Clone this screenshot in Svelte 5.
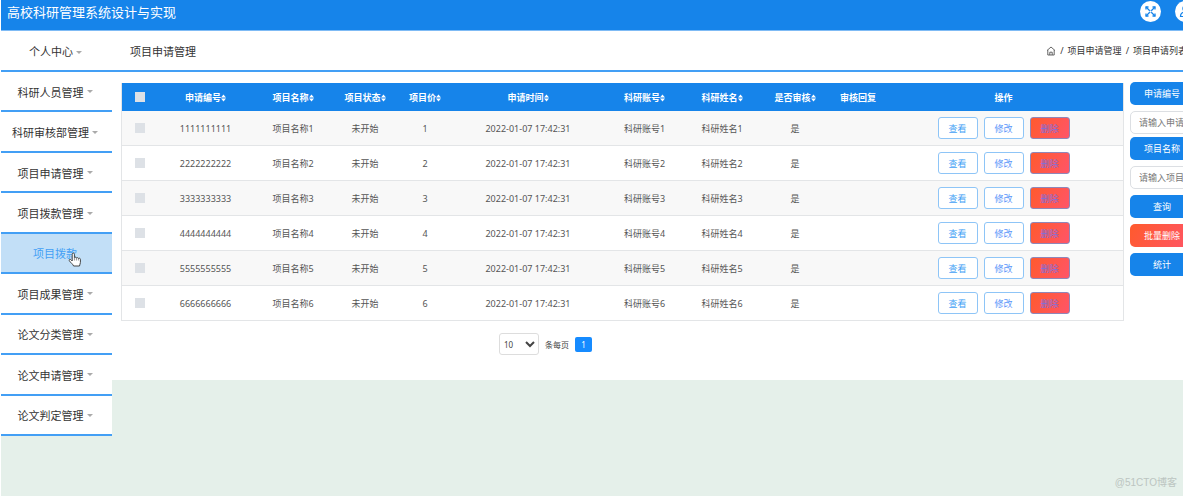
<script lang="ts">
  const menu = [
    { label: '科研人员管理' },
    { label: '科研审核部管理' },
    { label: '项目申请管理' },
    { label: '项目拨款管理' },
    { label: '项目拨款', child: true },
    { label: '项目成果管理' },
    { label: '论文分类管理' },
    { label: '论文申请管理' },
    { label: '论文判定管理' }
  ];

  const columns = [
    { title: '申请编号', sortable: true },
    { title: '项目名称', sortable: true },
    { title: '项目状态', sortable: true },
    { title: '项目价', sortable: true },
    { title: '申请时间', sortable: true },
    { title: '科研账号', sortable: true },
    { title: '科研姓名', sortable: true },
    { title: '是否审核', sortable: true },
    { title: '审核回复', sortable: false },
    { title: '操作', sortable: false }
  ];

  const rows = [1, 2, 3, 4, 5, 6].map((n) => ({
    code: String(n).repeat(10),
    name: `项目名称${n}`,
    state: '未开始',
    price: n,
    time: '2022-01-07 17:42:31',
    account: `科研账号${n}`,
    person: `科研姓名${n}`,
    checked: '是',
    reply: ''
  }));

  let pageSize = $state('10');
</script>

<div class="app">
  <header class="topbar">
    <h1>高校科研管理系统设计与实现</h1>
    <div class="tools">
      <button type="button" class="round" aria-label="全屏">
        <svg viewBox="0 0 21 21" width="21" height="21">
          <g fill="none" stroke="#1684ea" stroke-width="1.3">
            <path d="M6 8.5V6h2.5M12.5 6H15v2.5M15 12.5V15h-2.5M8.5 15H6v-2.5" />
            <path d="M6 6l9 9M15 6l-9 9" />
          </g>
          <circle cx="10.5" cy="10.5" r="1" fill="#fff" />
        </svg>
      </button>
      <button type="button" class="round" aria-label="用户">
        <svg viewBox="0 0 21 21" width="21" height="21">
          <g fill="none" stroke="#1684ea" stroke-width="1.2">
            <circle cx="10.5" cy="7.5" r="2.6" />
            <path d="M5.5 15.5c0-3 2-4.500 5-4.500s5 1.500 5 4.500z" />
          </g>
        </svg>
      </button>
    </div>
  </header>

  <div class="subbar">
    <a class="center-link" href="#center">个人中心<i class="caret"></i></a>
    <h2>项目申请管理</h2>
    <nav class="crumbs" aria-label="路径">
      <svg viewBox="0 0 10 10" width="10" height="10">
        <path d="M1 4.500L5 1l4 3.500M1.800 4v5h6.400V4M3.800 9V6.200h2.400V9" fill="none" stroke="#555" stroke-width="0.9" />
      </svg>
      <span>/</span>
      <a href="#apply">项目申请管理</a>
      <span>/</span>
      <a href="#list">项目申请列表</a>
    </nav>
  </div>

  <div class="body">
    <nav class="sidebar" aria-label="菜单">
      {#each menu as item}
        <a href="#menu" class:active={item.child}>
          {item.label}
          {#if item.child}
            <svg class="hand" viewBox="0 0 14 17" width="14" height="17">
              <path
                d="M4.200 10V3.200c0-1.600 2.200-1.600 2.200 0v3.500c.3-.8 1.900-.7 2 .3.500-.7 1.900-.5 2 .5.600-.6 2-.3 2 .8v3.200c0 1.300-.8 2-.9 3.500H5.600c-.5-1.700-3-3.300-4.300-5.300-.6-1.200.9-1.900 1.700-.9z"
                fill="#fff"
                stroke="#444"
                stroke-width="1"
              />
              <path d="M6.400 6.500v3M8.400 7v2.500M10.400 7.500v2" stroke="#666" stroke-width="0.7" />
            </svg>
          {:else}
            <i class="caret"></i>
          {/if}
        </a>
      {/each}
    </nav>

    <main>
      <section class="list">
        <table>
          <colgroup>
            <col class="w-check" />
            <col class="w-code" />
            <col class="w-name" />
            <col class="w-state" />
            <col class="w-price" />
            <col class="w-time" />
            <col class="w-account" />
            <col class="w-person" />
            <col class="w-audit" />
            <col class="w-reply" />
            <col />
          </colgroup>
          <thead>
            <tr>
              <th><input type="checkbox" aria-label="全选" /></th>
              {#each columns as col}
                <th>
                  {col.title}{#if col.sortable}<svg class="sort" viewBox="0 0 5 8" width="5" height="8"><path d="M0 3.400L2.500.4 5 3.400zM0 4.600h5L2.500 7.600z" fill="#fff" /></svg>{/if}
                </th>
              {/each}
            </tr>
          </thead>
          <tbody>
            {#each rows as row}
              <tr>
                <td><input type="checkbox" aria-label={row.name} /></td>
                <td>{row.code}</td>
                <td>{row.name}</td>
                <td>{row.state}</td>
                <td>{row.price}</td>
                <td>{row.time}</td>
                <td>{row.account}</td>
                <td>{row.person}</td>
                <td>{row.checked}</td>
                <td>{row.reply}</td>
                <td>
                  <div class="actions">
                    <button type="button">查看</button>
                    <button type="button" class="edit">修改</button>
                    <button type="button" class="danger">删除</button>
                  </div>
                </td>
              </tr>
            {/each}
          </tbody>
        </table>

        <div class="pager">
          <select id="page-size" bind:value={pageSize}>
            <option>10</option>
            <option>25</option>
            <option>50</option>
          </select>
          <label for="page-size">条每页</label>
          <button type="button">1</button>
        </div>
      </section>

      <form class="filters">
        <div class="field">
          <label for="code">申请编号</label>
          <input id="code" type="text" placeholder="请输入申请编号" />
        </div>
        <div class="field">
          <label for="name">项目名称</label>
          <input id="name" type="text" placeholder="请输入项目名称" />
        </div>
        <button type="button">查询</button>
        <button type="button" class="danger">批量删除</button>
        <button type="button">统计</button>
      </form>
    </main>
  </div>

  <span class="watermark">@51CTO博客</span>
</div>

<style>
  :global(body) {
    overflow: hidden;
    background: #fff;
  }

  .app {
    position: relative;
    box-sizing: border-box;
    min-height: 100vh;
    margin: 0 1px;
    overflow: hidden;
    background: #e5f0ea;
    color: #333;
    font-family: 'Noto Sans', 'Noto Sans CJK SC', sans-serif;
    font-size: 9px;
  }

  .app :global(*) {
    box-sizing: border-box;
  }

  a {
    color: inherit;
    text-decoration: none;
  }

  button,
  input,
  select {
    margin: 0;
    font: inherit;
  }

  h1,
  h2 {
    margin: 0;
    font-weight: 400;
  }

  .topbar {
    display: flex;
    justify-content: space-between;
    height: 31px;
    padding-left: 6px;
    border-bottom: 1px solid #7fbbf5;
    background: #1684ea;
    color: #fff;
  }

  h1 {
    font-size: 13px;
    line-height: 25px;
  }

  .tools {
    display: flex;
    gap: 14px;
    margin-right: -13px;
  }

  .round {
    width: 21px;
    height: 21px;
    margin-top: 1px;
    padding: 0;
    border: 0;
    border-radius: 50%;
    background: #fff;
  }

  .round svg {
    display: block;
  }

  .subbar {
    display: flex;
    align-items: center;
    height: 41px;
    border-bottom: 2px solid #439ff5;
    background: #fff;
    font-size: 11px;
  }

  .center-link {
    flex: 0 0 111px;
    padding-right: 2px;
    text-align: center;
  }

  h2 {
    margin-left: 18px;
    font-size: 11px;
  }

  .crumbs {
    display: flex;
    align-items: center;
    gap: 4px;
    margin-right: -4px;
    margin-left: auto;
    font-size: 9px;
    white-space: nowrap;
  }

  .caret {
    display: inline-block;
    margin-left: 3px;
    border: 3px solid transparent;
    border-top-color: #aaa;
    border-bottom-width: 0;
    vertical-align: middle;
  }

  .body {
    display: flex;
    align-items: flex-start;
  }

  .sidebar {
    display: flex;
    flex: 0 0 111px;
    flex-direction: column;
    min-height: 364px;
    background: #fff;
    font-size: 11px;
  }

  .sidebar a {
    position: relative;
    display: flex;
    flex: 1;
    align-items: center;
    justify-content: center;
    padding: 1px 3px 0 0;
    border-bottom: 2px solid #439ff5;
    white-space: nowrap;
  }

  .sidebar .active {
    background: #c2dff7;
    color: #439ff5;
  }

  .hand {
    position: absolute;
    top: 17px;
    left: 67px;
  }

  main {
    display: flex;
    flex: 1;
    gap: 6px;
    min-width: 0;
    min-height: 308px;
    padding: 10px 0 25px 9px;
    overflow: hidden;
    background: #fff;
  }

  .list {
    flex: 1;
    min-width: 0;
    padding-top: 1px;
  }

  table {
    width: 100%;
    border: 1px solid #e3e5e7;
    border-top: 0;
    border-spacing: 0;
    table-layout: fixed;
    color: #555;
    text-align: center;
  }

  .w-check {
    width: 36px;
  }

  .w-code {
    width: 95px;
  }

  .w-name {
    width: 80px;
  }

  .w-state {
    width: 64px;
  }

  .w-price {
    width: 56px;
  }

  .w-time {
    width: 150px;
  }

  .w-account {
    width: 83px;
  }

  .w-person {
    width: 72px;
  }

  .w-audit {
    width: 74px;
  }

  .w-reply {
    width: 52px;
  }

  th,
  td {
    padding: 0;
    white-space: nowrap;
  }

  th {
    height: 28px;
    background: #1684ea;
    color: #fff;
    font-weight: 700;
  }

  td {
    height: 35px;
    border-bottom: 1px solid #e3e5e7;
  }

  tbody tr:nth-child(odd) {
    background: #f8f8f8;
  }

  tbody tr:last-child td {
    height: 34px;
    border-bottom: 0;
  }

  input[type='checkbox'] {
    display: block;
    width: 10px;
    height: 10px;
    margin: 0 auto;
    appearance: none;
    background: #dde1e6;
  }

  .sort {
    vertical-align: middle;
  }

  .actions {
    display: flex;
    justify-content: center;
    gap: 6px;
  }

  .actions button {
    width: 40px;
    height: 22px;
    padding: 0;
    border: 1px solid #8ec5f7;
    border-radius: 3px;
    background: #fff;
    color: #439ff5;
  }

  .actions .edit {
    color: #5b96fa;
  }

  .actions .danger {
    border-color: #8f86b8;
    background: linear-gradient(120deg, #ff5a2d, #ff5568);
    color: #7a70e0;
  }

  .pager {
    display: flex;
    align-items: center;
    justify-content: center;
    gap: 6px;
    margin-top: 12px;
    padding-right: 154px;
    color: #444;
    font-size: 8px;
  }

  .pager select {
    width: 40px;
    height: 22px;
    padding: 0;
    border: 1px solid #ddd;
    border-radius: 3px;
    background: #fff;
    color: #444;
  }

  .pager button {
    width: 17px;
    height: 15px;
    padding: 0;
    border: 0;
    border-radius: 2px;
    background: #168bff;
    color: #fff;
    line-height: 15px;
  }

  .filters {
    display: flex;
    flex: 0 0 53px;
    flex-direction: column;
    gap: 6px;
    min-width: 0;
  }

  .field {
    display: flex;
    flex-direction: column;
    gap: 6px;
  }

  .field + .field {
    margin-top: -3px;
  }

  .field label,
  .filters button {
    width: 64px;
    height: 23px;
    padding: 0;
    border: 0;
    border-radius: 5px;
    background: #1684ea;
    color: #fff;
    line-height: 23px;
    text-align: center;
  }

  .filters .danger {
    background: linear-gradient(120deg, #ff5a2d, #ff5568);
  }

  .field input {
    width: 90px;
    height: 23px;
    padding: 0 8px;
    border: 1px solid #dcdfe3;
    border-radius: 5px;
    background: #fff;
  }

  .field input::placeholder {
    color: #777;
    opacity: 1;
  }

  .watermark {
    position: absolute;
    right: 6px;
    bottom: 5px;
    color: #bcc5c1;
    font-family: 'Liberation Sans', 'Noto Sans CJK SC', sans-serif;
    font-size: 10px;
    line-height: 16px;
  }
</style>
